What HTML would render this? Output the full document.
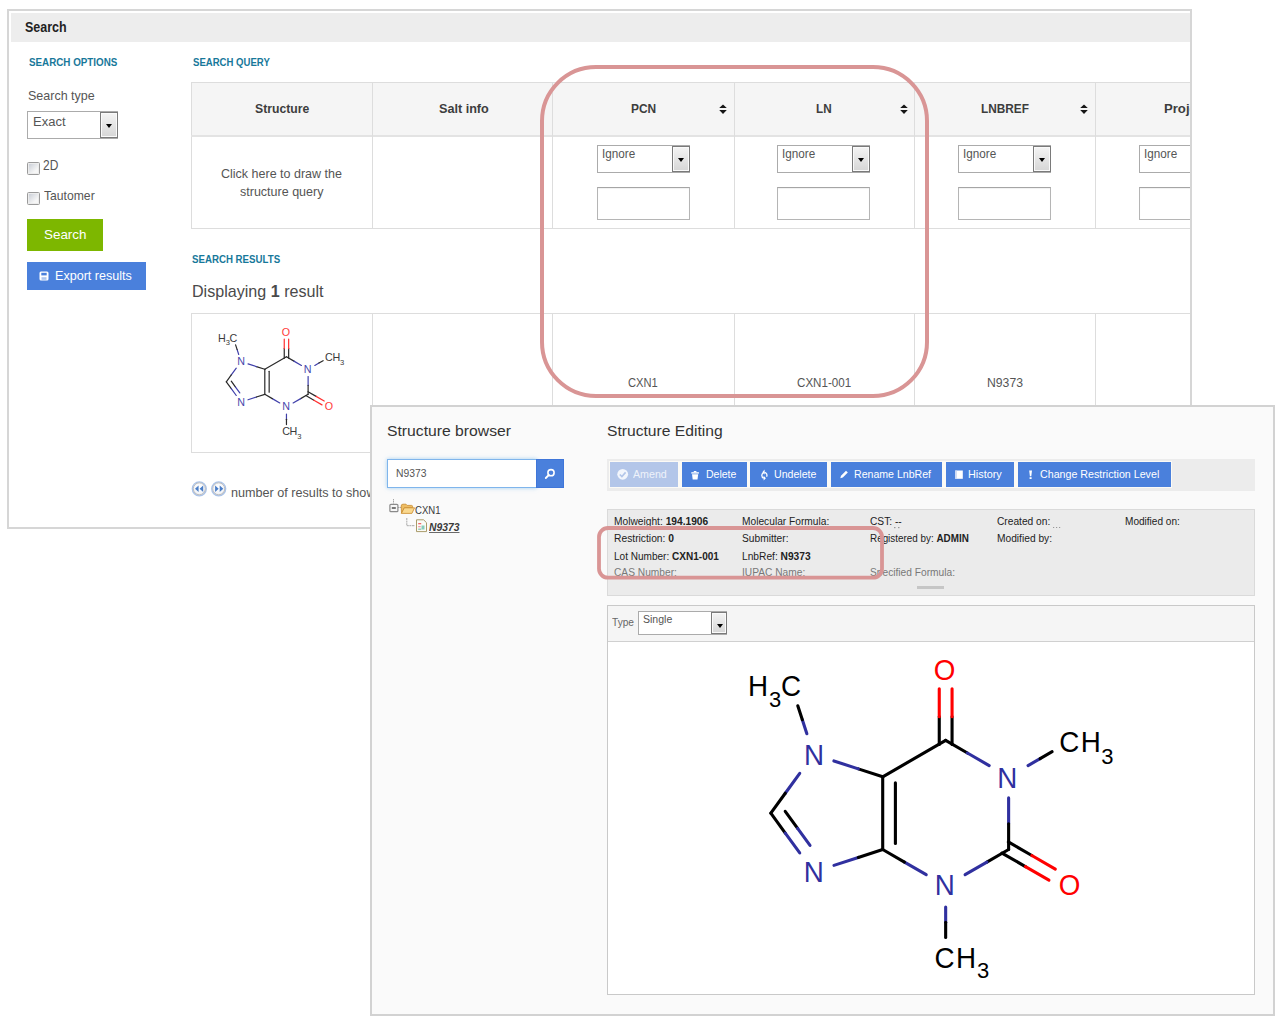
<!DOCTYPE html>
<html><head><meta charset="utf-8"><style>
html,body{margin:0;padding:0;}
body{width:1286px;height:1027px;overflow:hidden;background:#fff;position:relative;font-family:"Liberation Sans",sans-serif;color:#555;}
.a{position:absolute;}
.t{position:absolute;white-space:nowrap;line-height:1;transform-origin:0 0;}
#p1{position:absolute;left:7px;top:9px;width:1185px;height:520px;border:2px solid #d6d6d6;box-sizing:border-box;overflow:hidden;background:#fff;}
.in{position:absolute;left:-9px;top:-11px;width:1286px;height:1027px;}
.sel{position:absolute;background:#fff;border:1px solid #ababab;box-sizing:border-box;}
.sel .dd{position:absolute;right:-1px;top:0px;bottom:0px;width:18px;box-sizing:border-box;border:1px solid #7a7a7a;background:linear-gradient(#f4f4f4,#d6d6d6);box-shadow:inset 0 0 0 1px #fafafa;}
.sel .dd:after{content:"";position:absolute;left:4.5px;top:11px;border-left:3.6px solid transparent;border-right:3.6px solid transparent;border-top:4px solid #000;}
.inp{position:absolute;background:#fff;border:1px solid #b5b5b5;border-top-color:#a5a5a5;box-sizing:border-box;box-shadow:inset 0 1px 1px rgba(0,0,0,.06);}
.vl{position:absolute;width:1px;background:#dddddd;}
.hl{position:absolute;height:1px;background:#dddddd;}
.btn{position:absolute;background:#4a80dc;}
.cb{position:absolute;width:11px;height:11px;border:1px solid #9a9a9a;border-radius:1.5px;background:linear-gradient(135deg,#c5cad3,#f6f6f6 70%);box-shadow:inset 0 0 0 1px #ececec;}
</style></head><body>

<div id="p1"><div class="in">
<div class="a" style="left:11px;top:13px;width:1179px;height:29px;background:#ededed;"></div>
<div class="t" style="left:24.70px;top:20px;font-size:14.4px;color:#222;font-weight:bold;transform:scaleX(0.8683);">Search</div>
<div class="t" style="left:28.60px;top:58px;font-size:10.3px;color:#17789a;font-weight:bold;transform:scaleX(0.9524);">SEARCH OPTIONS</div>
<div class="t" style="left:27.80px;top:89px;font-size:13.3px;color:#555;transform:scaleX(0.9398);">Search type</div>
<div class="sel" style="left:27px;top:111px;width:91px;height:28px;"><div class="dd"></div></div>
<div class="t" style="left:33.10px;top:116px;font-size:12.5px;color:#555;transform:scaleX(1.0396);">Exact</div>
<div class="cb" style="left:27px;top:162px;"></div>
<div class="t" style="left:43.40px;top:158px;font-size:14.0px;color:#555;transform:scaleX(0.8551);">2D</div>
<div class="cb" style="left:27px;top:192px;"></div>
<div class="t" style="left:43.80px;top:189px;font-size:13.6px;color:#555;transform:scaleX(0.8944);">Tautomer</div>
<div class="btn" style="left:27px;top:219px;width:76px;height:32px;background:#7db700;"></div>
<div class="t" style="left:44.00px;top:229px;font-size:12.7px;color:#fff;transform:scaleX(1.0563);">Search</div>
<div class="btn" style="left:27px;top:262px;width:119px;height:28px;"></div>
<div class="t" style="left:54.80px;top:270px;font-size:12.8px;color:#fff;transform:scaleX(0.9828);">Export results</div>
<div class="t" style="left:192.50px;top:57px;font-size:10.8px;color:#17789a;font-weight:bold;transform:scaleX(0.8867);">SEARCH QUERY</div>
<div class="a" style="left:191px;top:82px;width:1100px;height:147px;border:1px solid #dddddd;box-sizing:border-box;"></div>
<div class="a" style="left:192px;top:83px;width:1100px;height:52px;background:#f5f5f5;"></div>
<div class="hl" style="left:191px;top:135px;width:1100px;height:2px;background:#e3e3e3;"></div>
<div class="vl" style="left:372px;top:82px;height:147px;"></div>
<div class="vl" style="left:552px;top:82px;height:147px;"></div>
<div class="vl" style="left:734px;top:82px;height:147px;"></div>
<div class="vl" style="left:914px;top:82px;height:147px;"></div>
<div class="vl" style="left:1095px;top:82px;height:147px;"></div>
<div class="t" style="left:255.30px;top:102px;font-size:13.4px;color:#3d3d3d;font-weight:bold;transform:scaleX(0.9116);">Structure</div>
<div class="t" style="left:438.80px;top:102px;font-size:13.4px;color:#3d3d3d;font-weight:bold;transform:scaleX(0.9423);">Salt info</div>
<div class="t" style="left:630.80px;top:102px;font-size:13.4px;color:#3d3d3d;font-weight:bold;transform:scaleX(0.8909);">PCN</div>
<div class="t" style="left:816.20px;top:102px;font-size:13.4px;color:#3d3d3d;font-weight:bold;transform:scaleX(0.8734);">LN</div>
<div class="t" style="left:981.00px;top:102px;font-size:13.4px;color:#3d3d3d;font-weight:bold;transform:scaleX(0.8834);">LNBREF</div>
<div class="t" style="left:1163.50px;top:102px;font-size:13.4px;color:#3d3d3d;font-weight:bold;transform:scaleX(0.9800);">Project</div>
<div class="t" style="left:221.30px;top:168px;font-size:12.4px;color:#555;transform:scaleX(1.0090);">Click here to draw the</div>
<div class="t" style="left:240.00px;top:186px;font-size:12.4px;color:#555;transform:scaleX(1.0097);">structure query</div>
<div class="sel" style="left:597px;top:145px;width:93px;height:28px;"><div class="dd"></div></div>
<div class="t" style="left:601.50px;top:148px;font-size:12.4px;color:#555;transform:scaleX(0.9444);">Ignore</div>
<div class="inp" style="left:597px;top:187px;width:93px;height:33px;"></div>
<div class="sel" style="left:777px;top:145px;width:93px;height:28px;"><div class="dd"></div></div>
<div class="t" style="left:781.50px;top:148px;font-size:12.4px;color:#555;transform:scaleX(0.9444);">Ignore</div>
<div class="inp" style="left:777px;top:187px;width:93px;height:33px;"></div>
<div class="sel" style="left:958px;top:145px;width:93px;height:28px;"><div class="dd"></div></div>
<div class="t" style="left:962.50px;top:148px;font-size:12.4px;color:#555;transform:scaleX(0.9444);">Ignore</div>
<div class="inp" style="left:958px;top:187px;width:93px;height:33px;"></div>
<div class="sel" style="left:1139px;top:145px;width:93px;height:28px;"><div class="dd"></div></div>
<div class="t" style="left:1143.50px;top:148px;font-size:12.4px;color:#555;transform:scaleX(0.9444);">Ignore</div>
<div class="inp" style="left:1139px;top:187px;width:93px;height:33px;"></div>
<svg class="a" style="left:718px;top:103px;" width="10" height="13" viewBox="0 0 10 13"><path d="M5 1.4 L8.8 5 L1.2 5 Z M1.2 7 L8.8 7 L5 11 Z" fill="#161616"/></svg>
<svg class="a" style="left:898.5px;top:103px;" width="10" height="13" viewBox="0 0 10 13"><path d="M5 1.4 L8.8 5 L1.2 5 Z M1.2 7 L8.8 7 L5 11 Z" fill="#161616"/></svg>
<svg class="a" style="left:1079px;top:103px;" width="10" height="13" viewBox="0 0 10 13"><path d="M5 1.4 L8.8 5 L1.2 5 Z M1.2 7 L8.8 7 L5 11 Z" fill="#161616"/></svg>
<div class="t" style="left:192.40px;top:254px;font-size:10.7px;color:#17789a;font-weight:bold;transform:scaleX(0.9065);">SEARCH RESULTS</div>
<div class="t" style="left:192.00px;top:283px;font-size:16.1px;color:#4a4a4a;">Displaying <b>1</b> result</div>
<div class="a" style="left:191px;top:313px;width:1100px;height:140px;border:1px solid #dddddd;box-sizing:border-box;"></div>
<div class="vl" style="left:372px;top:313px;height:140px;"></div>
<div class="vl" style="left:552px;top:313px;height:140px;"></div>
<div class="vl" style="left:734px;top:313px;height:140px;"></div>
<div class="vl" style="left:914px;top:313px;height:140px;"></div>
<div class="vl" style="left:1095px;top:313px;height:140px;"></div>
<div class="t" style="left:627.90px;top:377px;font-size:12.6px;color:#555;transform:scaleX(0.8865);">CXN1</div>
<div class="t" style="left:796.60px;top:377px;font-size:12.6px;color:#555;transform:scaleX(0.9213);">CXN1-001</div>
<div class="t" style="left:987.10px;top:377px;font-size:12.6px;color:#555;transform:scaleX(0.9695);">N9373</div>
<svg class="a" style="left:0;top:0;" width="1286" height="1027" viewBox="0 0 1286 1027"><g transform="translate(264.8 369.3) scale(0.344) translate(-882.7 -776.8)"><g stroke-width="3.5" stroke-linecap="round" fill="none"><line x1="882.70" y1="776.80" x2="945.66" y2="740.45" stroke="#2a2a2a"/><line x1="945.66" y1="740.45" x2="967.41" y2="753.01" stroke="#2a2a2a"/><line x1="967.41" y1="753.01" x2="989.17" y2="765.57" stroke="#4040aa"/><line x1="1008.62" y1="797.90" x2="1008.62" y2="823.70" stroke="#4040aa"/><line x1="1008.62" y1="823.70" x2="1008.62" y2="849.50" stroke="#2a2a2a"/><line x1="1008.62" y1="849.50" x2="986.87" y2="862.06" stroke="#2a2a2a"/><line x1="986.87" y1="862.06" x2="965.11" y2="874.62" stroke="#4040aa"/><line x1="926.21" y1="874.62" x2="904.45" y2="862.06" stroke="#4040aa"/><line x1="904.45" y1="862.06" x2="882.70" y2="849.50" stroke="#2a2a2a"/><line x1="882.70" y1="849.50" x2="882.70" y2="776.80" stroke="#2a2a2a"/><line x1="882.70" y1="776.80" x2="858.31" y2="768.88" stroke="#2a2a2a"/><line x1="858.31" y1="768.88" x2="833.93" y2="760.95" stroke="#4040aa"/><line x1="799.73" y1="773.37" x2="785.28" y2="793.26" stroke="#4040aa"/><line x1="785.28" y1="793.26" x2="770.83" y2="813.15" stroke="#2a2a2a"/><line x1="770.83" y1="813.15" x2="785.28" y2="833.04" stroke="#2a2a2a"/><line x1="785.28" y1="833.04" x2="799.73" y2="852.93" stroke="#4040aa"/><line x1="833.93" y1="865.35" x2="858.31" y2="857.42" stroke="#4040aa"/><line x1="858.31" y1="857.42" x2="882.70" y2="849.50" stroke="#2a2a2a"/><line x1="1028.07" y1="765.57" x2="1040.10" y2="758.62" stroke="#4040aa"/><line x1="1040.10" y1="758.62" x2="1052.13" y2="751.68" stroke="#2a2a2a"/><line x1="945.66" y1="906.95" x2="945.66" y2="922.20" stroke="#4040aa"/><line x1="945.66" y1="922.20" x2="945.66" y2="937.45" stroke="#2a2a2a"/><line x1="806.87" y1="733.76" x2="802.33" y2="719.76" stroke="#4040aa"/><line x1="802.33" y1="719.76" x2="797.78" y2="705.76" stroke="#2a2a2a"/><line x1="952.06" y1="744.45" x2="952.06" y2="716.65" stroke="#2a2a2a"/><line x1="952.06" y1="716.65" x2="952.06" y2="688.85" stroke="#ff3030"/><line x1="939.26" y1="744.45" x2="939.26" y2="716.65" stroke="#2a2a2a"/><line x1="939.26" y1="716.65" x2="939.26" y2="688.85" stroke="#ff3030"/><line x1="1001.96" y1="853.04" x2="1025.44" y2="866.60" stroke="#2a2a2a"/><line x1="1025.44" y1="866.60" x2="1048.93" y2="880.16" stroke="#ff3030"/><line x1="1008.36" y1="841.96" x2="1031.84" y2="855.52" stroke="#2a2a2a"/><line x1="1031.84" y1="855.52" x2="1055.33" y2="869.08" stroke="#ff3030"/><line x1="895.40" y1="782.80" x2="895.40" y2="843.50" stroke="#2a2a2a"/><line x1="785.22" y1="811.35" x2="797.61" y2="828.41" stroke="#262626"/><line x1="797.61" y1="828.41" x2="810.00" y2="845.46" stroke="#4040aa"/></g><g font-family="Liberation Sans"><text x="814.00" y="764.92" fill="#4848ac" font-size="30" text-anchor="middle" transform="translate(814.00 0) scale(1.04 1) translate(-814.00 0)">N</text><text x="813.75" y="882.27" fill="#4848ac" font-size="30" text-anchor="middle" transform="translate(813.75 0) scale(1.04 1) translate(-813.75 0)">N</text><text x="1007.20" y="788.17" fill="#4848ac" font-size="30" text-anchor="middle" transform="translate(1007.20 0) scale(1.04 1) translate(-1007.20 0)">N</text><text x="944.70" y="895.22" fill="#4848ac" font-size="30" text-anchor="middle" transform="translate(944.70 0) scale(1.04 1) translate(-944.70 0)">N</text><text x="944.45" y="680.32" fill="#ff3a3a" font-size="30" text-anchor="middle" transform="translate(944.45 0) scale(1.04 1) translate(-944.45 0)">O</text><text x="1069.45" y="894.77" fill="#ff3a3a" font-size="30" text-anchor="middle" transform="translate(1069.45 0) scale(1.04 1) translate(-1069.45 0)">O</text><text x="1069.25" y="752.00" fill="#3a3a3a" font-size="30" text-anchor="middle" transform="translate(1069.25 0) scale(1.04 1) translate(-1069.25 0)">C</text><text x="1090.80" y="752.00" fill="#3a3a3a" font-size="30" text-anchor="middle" transform="translate(1090.80 0) scale(1.04 1) translate(-1090.80 0)">H</text><text x="1107.35" y="763.60" fill="#3a3a3a" font-size="20" text-anchor="middle" transform="translate(1107.35 0) scale(1.1 1) translate(-1107.35 0)">3</text><text x="944.45" y="967.60" fill="#3a3a3a" font-size="30" text-anchor="middle" transform="translate(944.45 0) scale(1.04 1) translate(-944.45 0)">C</text><text x="966.00" y="967.60" fill="#3a3a3a" font-size="30" text-anchor="middle" transform="translate(966.00 0) scale(1.04 1) translate(-966.00 0)">H</text><text x="983.00" y="978.30" fill="#3a3a3a" font-size="20" text-anchor="middle" transform="translate(983.00 0) scale(1.1 1) translate(-983.00 0)">3</text><text x="758.10" y="696.20" fill="#3a3a3a" font-size="30" text-anchor="middle" transform="translate(758.10 0) scale(1.04 1) translate(-758.10 0)">H</text><text x="775.10" y="707.30" fill="#3a3a3a" font-size="20" text-anchor="middle" transform="translate(775.10 0) scale(1.1 1) translate(-775.10 0)">3</text><text x="791.15" y="696.20" fill="#3a3a3a" font-size="30" text-anchor="middle" transform="translate(791.15 0) scale(1.04 1) translate(-791.15 0)">C</text></g></g></svg>
<div class="t" style="left:231.40px;top:487px;font-size:12.4px;color:#555;transform:scaleX(1.0186);">number of results to show</div>
<svg class="a" style="left:190px;top:479px;" width="40" height="20" viewBox="0 0 40 20">
<defs><radialGradient id="pg" cx="50%" cy="40%" r="60%"><stop offset="0" stop-color="#fff"/><stop offset="0.7" stop-color="#f2f4f8"/><stop offset="1" stop-color="#d8dde6"/></radialGradient></defs>
<circle cx="9.3" cy="9.8" r="7" fill="url(#pg)" stroke="#a9c3ea" stroke-width="1.3"/>
<circle cx="9.3" cy="9.8" r="6" fill="none" stroke="#bdbdbd" stroke-width="1"/>
<path d="M5 9.8 L8.6 6.6 L8.6 13 Z M9.6 9.8 L13.2 6.6 L13.2 13 Z" fill="#4a7ec8"/>
<circle cx="28.7" cy="9.8" r="7" fill="url(#pg)" stroke="#a9c3ea" stroke-width="1.3"/>
<circle cx="28.7" cy="9.8" r="6" fill="none" stroke="#bdbdbd" stroke-width="1"/>
<path d="M25.1 6.6 L28.7 9.8 L25.1 13 Z M29.7 6.6 L33.3 9.8 L29.7 13 Z" fill="#4a7ec8"/>
</svg>
</div></div>
<svg class="a" style="left:0;top:0;" width="1286" height="1027" viewBox="0 0 1286 1027"><rect x="542" y="67" width="385" height="329" rx="54" ry="54" fill="none" stroke="#d99595" stroke-width="4"/></svg>
<div class="a" style="left:370px;top:405px;width:905px;height:611px;border:2px solid #d2d2d2;box-sizing:border-box;background:#fafafa;"></div>
<div class="t" style="left:387.20px;top:423px;font-size:15.5px;color:#333;transform:scaleX(1.0137);">Structure browser</div>
<div class="t" style="left:607.10px;top:423px;font-size:15.3px;color:#333;transform:scaleX(1.0229);">Structure Editing</div>
<div class="a" style="left:387px;top:459px;width:150px;height:29px;background:#fff;border:1px solid #7fb5ec;box-sizing:border-box;box-shadow:0 0 4px rgba(102,175,233,.6);"></div>
<div class="t" style="left:395.70px;top:469px;font-size:10.3px;color:#555;transform:scaleX(1.0048);">N9373</div>
<div class="a" style="left:536px;top:459px;width:28px;height:29px;background:#4a80dc;border:1px solid #3f76d9;box-sizing:border-box;"></div>
<svg class="a" style="left:536px;top:459px;" width="28" height="29" viewBox="0 0 28 29"><circle cx="15" cy="13.7" r="3.1" fill="none" stroke="#fff" stroke-width="1.6"/><line x1="12.8" y1="16" x2="9.8" y2="19" stroke="#fff" stroke-width="1.8" stroke-linecap="round"/></svg>
<svg class="a" style="left:385px;top:498px;" width="80" height="40" viewBox="0 0 80 40">
<line x1="8.5" y1="1" x2="8.5" y2="5.5" stroke="#a8a8a8" stroke-width="1" stroke-dasharray="1.5 0.5"/>
<line x1="13" y1="9.5" x2="16" y2="9.5" stroke="#a8a8a8" stroke-width="1" stroke-dasharray="1.5 0.5"/>
<rect x="4.9" y="6.3" width="8" height="7.4" rx="1" fill="#f6f6f6" stroke="#8a8a8a" stroke-width="1.2"/>
<line x1="6.8" y1="10" x2="10.8" y2="10" stroke="#333" stroke-width="1.3"/>
<path d="M16.2 8 Q16.2 6.2 18 6.2 L21 6.2 L22.2 7.4 L26.5 7.4 Q27.6 7.4 27.6 8.6 L27.6 9.6 L19.5 9.6 L16.5 15.2 Z" fill="#eebd63" stroke="#c98a2c" stroke-width="0.8"/>
<path d="M16.4 15.4 L19.3 9.8 L29.6 9.8 L26.9 15.4 Z" fill="#f9d88f" stroke="#c98a2c" stroke-width="0.8"/>
<line x1="21.8" y1="20" x2="21.8" y2="27.7" stroke="#a8a8a8" stroke-width="1" stroke-dasharray="2 0.6"/>
<line x1="21.8" y1="27.7" x2="30" y2="27.7" stroke="#a8a8a8" stroke-width="1" stroke-dasharray="2 0.6"/>
<path d="M31.5 21.8 L38.6 21.8 L41.5 24.7 L41.5 33.6 L31.5 33.6 Z" fill="#fbfbf6" stroke="#a99b6a" stroke-width="1"/>
<rect x="33.2" y="25" width="3" height="1.3" fill="#e66"/><rect x="33.2" y="28" width="2.5" height="1.3" fill="#e9a"/><rect x="36.5" y="27.5" width="3" height="4" fill="#8cb"/><rect x="33.2" y="30.5" width="3" height="1.5" fill="#9cb"/>
</svg>

<div class="t" style="left:414.90px;top:505px;font-size:11.3px;color:#3a3a3a;transform:scaleX(0.8458);">CXN1</div>
<div class="t" style="left:429.20px;top:522px;font-size:10.8px;color:#3a3a3a;font-weight:bold;font-style:italic;transform:scaleX(0.9583);text-decoration:underline;text-decoration-color:#6a6a6a;">N9373</div>
<div class="a" style="left:607px;top:459px;width:648px;height:32px;background:#ececec;"></div>
<div class="a" style="left:609px;top:461px;width:563px;height:27px;background:#fbfaf6;"></div>
<div class="btn" style="left:610px;top:462px;width:68px;height:25px;background:#b3c6e9;"></div>
<div class="btn" style="left:682px;top:462px;width:65px;height:25px;"></div>
<div class="btn" style="left:750px;top:462px;width:77px;height:25px;"></div>
<div class="btn" style="left:831px;top:462px;width:111px;height:25px;"></div>
<div class="btn" style="left:946px;top:462px;width:68px;height:25px;"></div>
<div class="btn" style="left:1018px;top:462px;width:153px;height:25px;"></div>
<div class="t" style="left:632.80px;top:469px;font-size:10.8px;color:#eef2fa;transform:scaleX(0.9879);">Amend</div>
<div class="t" style="left:705.50px;top:469px;font-size:10.8px;color:#fff;transform:scaleX(0.9736);">Delete</div>
<div class="t" style="left:773.70px;top:469px;font-size:10.8px;color:#fff;transform:scaleX(0.9807);">Undelete</div>
<div class="t" style="left:854.10px;top:469px;font-size:10.8px;color:#fff;transform:scaleX(0.9801);">Rename LnbRef</div>
<div class="t" style="left:968.30px;top:469px;font-size:10.8px;color:#fff;transform:scaleX(1.0060);">History</div>
<div class="t" style="left:1040.10px;top:469px;font-size:10.8px;color:#fff;transform:scaleX(0.9887);">Change Restriction Level</div>
<svg class="a" style="left:0;top:0;" width="1286" height="1027" viewBox="0 0 1286 1027">
<circle cx="622.7" cy="474.3" r="5.4" fill="#f3f6fc"/>
<path d="M619.8 474.5 L621.9 476.6 L625.6 472.4" fill="none" stroke="#b3c6e9" stroke-width="1.6"/>
<rect x="691.3" y="472.2" width="7.6" height="1.4" fill="#fff"/><rect x="693.8" y="471" width="2.6" height="1.2" fill="#fff"/>
<path d="M692 474.3 L698.2 474.3 L697.5 479.6 L692.7 479.6 Z" fill="#fff"/>
<path d="M764.2 472.3 A3.1 3.1 0 0 0 763.8 478.2" fill="none" stroke="#fff" stroke-width="1.3"/><path d="M764.6 472.3 A3.1 3.1 0 0 1 766.6 476.8" fill="none" stroke="#fff" stroke-width="1.3"/><path d="M764.6 469.6 L764.6 474.4 L762.3 472.2 Z" fill="#fff"/><path d="M763.6 475.8 L763.6 480.6 L765.9 478.2 Z" fill="#fff"/><path d="M840.3 478.2 L841 475.8 L846 470.8 L847.8 472.6 L842.8 477.6 Z" fill="#fff"/>
<rect x="955.2" y="470.5" width="7.6" height="8.3" fill="#fff"/><rect x="955.2" y="470.5" width="1.6" height="8.3" fill="#c9d6f2"/>
<path d="M1029.2 470.5 L1032 470.5 L1031.3 476.2 L1029.9 476.2 Z" fill="#fff"/><rect x="1029.6" y="477.2" width="2" height="1.8" fill="#fff"/>
<rect x="39.5" y="271.5" width="9" height="9" rx="1.5" fill="#fff"/><rect x="41.3" y="272.8" width="5.4" height="2.6" fill="#4a80dc"/><rect x="41.5" y="277.2" width="5" height="2.6" fill="#4a80dc" opacity=".45"/>
</svg>
<div class="a" style="left:607px;top:509px;width:648px;height:87px;background:#ebebeb;border:1px solid #dadada;box-sizing:border-box;"></div>
<div class="t" style="left:614.20px;top:517px;font-size:10.0px;color:#222;transform:scaleX(1.0207);">Molweight: <b>194.1906</b></div>
<div class="t" style="left:742.00px;top:517px;font-size:10.0px;color:#222;transform:scaleX(1.0200);">Molecular Formula:</div>
<div class="t" style="left:870.00px;top:517px;font-size:10.0px;color:#222;transform:scaleX(1.0200);">CST: --</div>
<div class="t" style="left:997.00px;top:517px;font-size:10.0px;color:#222;transform:scaleX(1.0200);">Created on:</div>
<svg class="a" style="left:1053px;top:527px;" width="14" height="3"><rect x="0" y="0" width="1.2" height="1" fill="#999"/><rect x="3" y="0" width="1.2" height="1" fill="#999"/><rect x="6" y="0" width="1.2" height="1" fill="#999"/></svg>
<svg class="a" style="left:893px;top:527px;" width="12" height="3"><rect x="1" y="0" width="1.5" height="1.2" fill="#999"/><rect x="5" y="0" width="1.5" height="1.2" fill="#999"/></svg>
<div class="t" style="left:1124.60px;top:517px;font-size:10.0px;color:#222;transform:scaleX(1.0059);">Modified on:</div>
<div class="t" style="left:614.20px;top:534px;font-size:10.0px;color:#222;transform:scaleX(1.0282);">Restriction: <b>0</b></div>
<div class="t" style="left:742.00px;top:534px;font-size:10.0px;color:#222;transform:scaleX(1.0200);">Submitter:</div>
<div class="t" style="left:870.00px;top:534px;font-size:10.0px;color:#222;transform:scaleX(0.9877);">Registered by: <b>ADMIN</b></div>
<div class="t" style="left:997.00px;top:534px;font-size:10.0px;color:#222;transform:scaleX(1.0200);">Modified by:</div>
<div class="t" style="left:614.20px;top:552px;font-size:10.0px;color:#222;transform:scaleX(1.0039);">Lot Number: <b>CXN1-001</b></div>
<div class="t" style="left:742.00px;top:552px;font-size:10.0px;color:#222;transform:scaleX(1.0200);">LnbRef: <b>N9373</b></div>
<div class="t" style="left:614.20px;top:568px;font-size:10.0px;color:#787878;transform:scaleX(1.0200);">CAS Number:</div>
<div class="t" style="left:742.00px;top:568px;font-size:10.0px;color:#787878;transform:scaleX(1.0200);">IUPAC Name:</div>
<div class="t" style="left:870.00px;top:568px;font-size:10.0px;color:#787878;transform:scaleX(1.0196);">Specified Formula:</div>
<div class="a" style="left:917px;top:586px;width:27px;height:3px;background:#c6c6c6;"></div>
<div class="a" style="left:607px;top:605px;width:648px;height:390px;background:#fff;border:1px solid #c9c9c9;box-sizing:border-box;"></div>
<div class="a" style="left:608px;top:606px;width:646px;height:35px;background:#f5f5f5;border-bottom:1px solid #d0d0d0;"></div>
<div class="t" style="left:612.00px;top:617px;font-size:11.4px;color:#666;transform:scaleX(0.8901);">Type</div>
<div class="sel" style="left:638px;top:611px;width:89px;height:24px;"><div class="dd" style="width:16px;"></div></div>
<div class="t" style="left:642.80px;top:613px;font-size:11.7px;color:#555;transform:scaleX(0.9008);">Single</div>
<svg class="a" style="left:0;top:0;" width="1286" height="1027" viewBox="0 0 1286 1027"><g stroke-width="3.1" stroke-linecap="round" fill="none"><line x1="882.70" y1="776.80" x2="945.66" y2="740.45" stroke="#000"/><line x1="945.66" y1="740.45" x2="967.41" y2="753.01" stroke="#000"/><line x1="967.41" y1="753.01" x2="989.17" y2="765.57" stroke="#30309f"/><line x1="1008.62" y1="797.90" x2="1008.62" y2="823.70" stroke="#30309f"/><line x1="1008.62" y1="823.70" x2="1008.62" y2="849.50" stroke="#000"/><line x1="1008.62" y1="849.50" x2="986.87" y2="862.06" stroke="#000"/><line x1="986.87" y1="862.06" x2="965.11" y2="874.62" stroke="#30309f"/><line x1="926.21" y1="874.62" x2="904.45" y2="862.06" stroke="#30309f"/><line x1="904.45" y1="862.06" x2="882.70" y2="849.50" stroke="#000"/><line x1="882.70" y1="849.50" x2="882.70" y2="776.80" stroke="#000"/><line x1="882.70" y1="776.80" x2="858.31" y2="768.88" stroke="#000"/><line x1="858.31" y1="768.88" x2="833.93" y2="760.95" stroke="#30309f"/><line x1="799.73" y1="773.37" x2="785.28" y2="793.26" stroke="#30309f"/><line x1="785.28" y1="793.26" x2="770.83" y2="813.15" stroke="#000"/><line x1="770.83" y1="813.15" x2="785.28" y2="833.04" stroke="#000"/><line x1="785.28" y1="833.04" x2="799.73" y2="852.93" stroke="#30309f"/><line x1="833.93" y1="865.35" x2="858.31" y2="857.42" stroke="#30309f"/><line x1="858.31" y1="857.42" x2="882.70" y2="849.50" stroke="#000"/><line x1="1028.07" y1="765.57" x2="1040.10" y2="758.62" stroke="#30309f"/><line x1="1040.10" y1="758.62" x2="1052.13" y2="751.68" stroke="#000"/><line x1="945.66" y1="906.95" x2="945.66" y2="922.20" stroke="#30309f"/><line x1="945.66" y1="922.20" x2="945.66" y2="937.45" stroke="#000"/><line x1="806.87" y1="733.76" x2="802.33" y2="719.76" stroke="#30309f"/><line x1="802.33" y1="719.76" x2="797.78" y2="705.76" stroke="#000"/><line x1="952.06" y1="744.45" x2="952.06" y2="716.65" stroke="#000"/><line x1="952.06" y1="716.65" x2="952.06" y2="688.85" stroke="#ff0000"/><line x1="939.26" y1="744.45" x2="939.26" y2="716.65" stroke="#000"/><line x1="939.26" y1="716.65" x2="939.26" y2="688.85" stroke="#ff0000"/><line x1="1001.96" y1="853.04" x2="1025.44" y2="866.60" stroke="#000"/><line x1="1025.44" y1="866.60" x2="1048.93" y2="880.16" stroke="#ff0000"/><line x1="1008.36" y1="841.96" x2="1031.84" y2="855.52" stroke="#000"/><line x1="1031.84" y1="855.52" x2="1055.33" y2="869.08" stroke="#ff0000"/><line x1="895.40" y1="782.80" x2="895.40" y2="843.50" stroke="#000"/><line x1="785.22" y1="811.35" x2="797.61" y2="828.41" stroke="#000"/><line x1="797.61" y1="828.41" x2="810.00" y2="845.46" stroke="#30309f"/></g><g font-family="Liberation Sans"><text x="814.00" y="764.92" fill="#30309f" font-size="30" text-anchor="middle" transform="translate(814.00 0) scale(0.926 1) translate(-814.00 0)">N</text><text x="813.75" y="882.27" fill="#30309f" font-size="30" text-anchor="middle" transform="translate(813.75 0) scale(0.926 1) translate(-813.75 0)">N</text><text x="1007.20" y="788.17" fill="#30309f" font-size="30" text-anchor="middle" transform="translate(1007.20 0) scale(0.926 1) translate(-1007.20 0)">N</text><text x="944.70" y="895.22" fill="#30309f" font-size="30" text-anchor="middle" transform="translate(944.70 0) scale(0.926 1) translate(-944.70 0)">N</text><text x="944.45" y="680.32" fill="#ff0000" font-size="30" text-anchor="middle" transform="translate(944.45 0) scale(0.926 1) translate(-944.45 0)">O</text><text x="1069.45" y="894.77" fill="#ff0000" font-size="30" text-anchor="middle" transform="translate(1069.45 0) scale(0.926 1) translate(-1069.45 0)">O</text><text x="1069.25" y="752.00" fill="#000" font-size="30" text-anchor="middle" transform="translate(1069.25 0) scale(0.926 1) translate(-1069.25 0)">C</text><text x="1090.80" y="752.00" fill="#000" font-size="30" text-anchor="middle" transform="translate(1090.80 0) scale(0.926 1) translate(-1090.80 0)">H</text><text x="1107.35" y="763.60" fill="#000" font-size="22" text-anchor="middle" transform="translate(1107.35 0) scale(1.0 1) translate(-1107.35 0)">3</text><text x="944.45" y="967.60" fill="#000" font-size="30" text-anchor="middle" transform="translate(944.45 0) scale(0.926 1) translate(-944.45 0)">C</text><text x="966.00" y="967.60" fill="#000" font-size="30" text-anchor="middle" transform="translate(966.00 0) scale(0.926 1) translate(-966.00 0)">H</text><text x="983.00" y="978.30" fill="#000" font-size="22" text-anchor="middle" transform="translate(983.00 0) scale(1.0 1) translate(-983.00 0)">3</text><text x="758.10" y="696.20" fill="#000" font-size="30" text-anchor="middle" transform="translate(758.10 0) scale(0.926 1) translate(-758.10 0)">H</text><text x="775.10" y="707.30" fill="#000" font-size="22" text-anchor="middle" transform="translate(775.10 0) scale(1.0 1) translate(-775.10 0)">3</text><text x="791.15" y="696.20" fill="#000" font-size="30" text-anchor="middle" transform="translate(791.15 0) scale(0.926 1) translate(-791.15 0)">C</text></g></svg>
<svg class="a" style="left:0;top:0;" width="1286" height="1027" viewBox="0 0 1286 1027"><rect x="599" y="528" width="283" height="49.7" rx="9" ry="9" fill="none" stroke="#d99595" stroke-width="3.8"/></svg>
</body></html>
